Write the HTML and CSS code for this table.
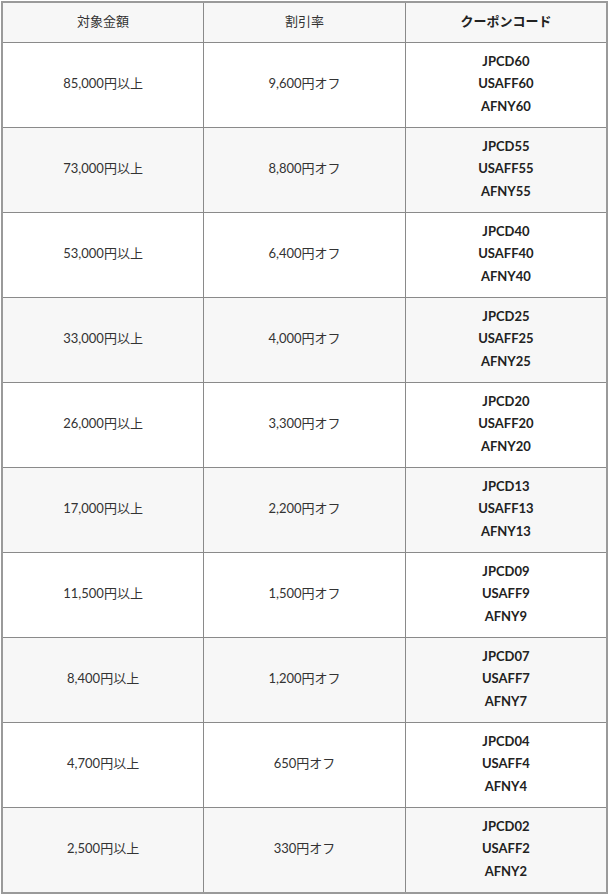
FILE: index.html
```html
<!DOCTYPE html>
<html lang="ja">
<head>
<meta charset="utf-8">
<link rel="stylesheet" href="styles.css">
</head>
<body>
<table class="coupon-table">
  <thead>
    <tr><th>対象金額</th><th>割引率</th><th class="strong">クーポンコード</th></tr>
  </thead>
  <tbody>
    <tr><td>85,000円以上</td><td>9,600円オフ</td><td class="codes">JPCD60<br>USAFF60<br>AFNY60</td></tr>
    <tr><td>73,000円以上</td><td>8,800円オフ</td><td class="codes">JPCD55<br>USAFF55<br>AFNY55</td></tr>
    <tr><td>53,000円以上</td><td>6,400円オフ</td><td class="codes">JPCD40<br>USAFF40<br>AFNY40</td></tr>
    <tr><td>33,000円以上</td><td>4,000円オフ</td><td class="codes">JPCD25<br>USAFF25<br>AFNY25</td></tr>
    <tr><td>26,000円以上</td><td>3,300円オフ</td><td class="codes">JPCD20<br>USAFF20<br>AFNY20</td></tr>
    <tr><td>17,000円以上</td><td>2,200円オフ</td><td class="codes">JPCD13<br>USAFF13<br>AFNY13</td></tr>
    <tr><td>11,500円以上</td><td>1,500円オフ</td><td class="codes">JPCD09<br>USAFF9<br>AFNY9</td></tr>
    <tr><td>8,400円以上</td><td>1,200円オフ</td><td class="codes">JPCD07<br>USAFF7<br>AFNY7</td></tr>
    <tr><td>4,700円以上</td><td>650円オフ</td><td class="codes">JPCD04<br>USAFF4<br>AFNY4</td></tr>
    <tr><td>2,500円以上</td><td>330円オフ</td><td class="codes">JPCD02<br>USAFF2<br>AFNY2</td></tr>
  </tbody>
</table>
</body>
</html>
```
FILE: styles.css
```css
html, body {
  margin: 0;
  padding: 0;
  background: #ffffff;
}
body {
  padding: 1px 0 0 1px;
  font-family: Lato, "Noto Sans CJK JP", sans-serif;
  font-size: 13px;
  color: #333333;
}
.coupon-table {
  width: 607px;
  border-collapse: collapse;
  table-layout: fixed;
  border: 2px solid #9a9a9a;
}
.coupon-table th,
.coupon-table td {
  border: 1px solid #8a8a8a;
  text-align: center;
  vertical-align: middle;
  padding: 0 0 5px 0;
}
.coupon-table th {
  height: 35px;
  padding-bottom: 4px;
  background: #f7f7f7;
  font-weight: normal;
  color: #333333;
}
.coupon-table th.strong {
  font-weight: bold;
  color: #222222;
}
.coupon-table td {
  height: 79px;
}
.coupon-table tbody tr:nth-child(even) td {
  background: #f7f7f7;
}
.coupon-table td.codes {
  font-weight: bold;
  color: #222222;
  line-height: 22.5px;
  height: 81px;
  padding-bottom: 3px;
}
```
